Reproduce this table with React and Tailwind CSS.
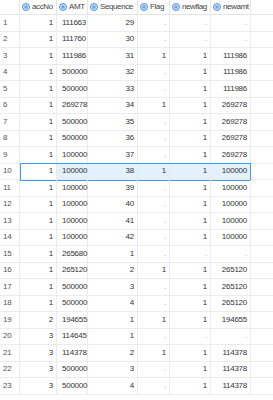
const rows = [
  [1, "111663", 29, ".", ".", "."],
  [1, "111760", 30, ".", ".", "."],
  [1, "111986", 31, "1", "1", "111986"],
  [1, "500000", 32, ".", "1", "111986"],
  [1, "500000", 33, ".", "1", "111986"],
  [1, "269278", 34, "1", "1", "269278"],
  [1, "500000", 35, ".", "1", "269278"],
  [1, "500000", 36, ".", "1", "269278"],
  [1, "100000", 37, ".", "1", "269278"],
  [1, "100000", 38, "1", "1", "100000"],
  [1, "100000", 39, ".", "1", "100000"],
  [1, "100000", 40, ".", "1", "100000"],
  [1, "100000", 41, ".", "1", "100000"],
  [1, "100000", 42, ".", "1", "100000"],
  [1, "265680", 1, ".", ".", "."],
  [1, "265120", 2, "1", "1", "265120"],
  [1, "500000", 3, ".", "1", "265120"],
  [1, "500000", 4, ".", "1", "265120"],
  [2, "194655", 1, "1", "1", "194655"],
  [3, "114645", 1, ".", ".", "."],
  [3, "114378", 2, "1", "1", "114378"],
  [3, "500000", 3, ".", "1", "114378"],
  [3, "500000", 4, ".", "1", "114378"],
];

const cols = "grid grid-cols-[20px_37px_31px_50px_32px_41px_40px]";

function NumIcon() {
  return (
    <svg width="8" height="8" viewBox="0 0 8 8" className="shrink-0">
      <circle cx="4" cy="4" r="3.5" fill="#d6e8fa" stroke="#3d86d8" strokeWidth="0.9" />
      <path d="M2.3 3.2h3.4M2.3 4.8h3.4M3.2 2.2v3.6M4.8 2.2v3.6" stroke="#3d86d8" strokeWidth="0.6" />
    </svg>
  );
}

function Head({ label }) {
  return (
    <div className="flex items-center gap-[2px] pl-[2px] border-r border-[#e6e6e6] overflow-hidden whitespace-nowrap tracking-[-0.4px]">
      <NumIcon />
      <span>{label}</span>
    </div>
  );
}

function Val({ v, left, sel }) {
  const miss = v === ".";
  return (
    <div
      className={`flex items-center border-r border-[#ececec] whitespace-nowrap ${
        left ? "justify-start pl-[5px]" : "justify-end pr-[3px]"
      } ${miss ? "text-[#9a9a9a]" : ""} ${sel ? "bg-[#e3f1fc]" : ""}`}
    >
      {v}
    </div>
  );
}

export default function App() {
  return (
    <div
      className="w-[273px] h-[400px] bg-white text-[#333] text-[8px] tracking-[-0.25px] overflow-hidden"
      style={{ fontFamily: '"Liberation Sans", Arial, sans-serif' }}
    >
      <div className={`${cols} h-[15px] border-b border-[#e6e6e6] text-[#444]`}>
        <div className="border-r border-[#e6e6e6]"></div>
        <Head label="accNo" />
        <Head label="AMT" />
        <Head label="Sequence" />
        <Head label="Flag" />
        <Head label="newflag" />
        <Head label="newamt" />
      </div>
      {rows.map((r, i) => {
        const sel = i === 9;
        return (
          <div key={i} className={`${cols} h-[16.5px] border-b border-[#ececec] relative`}>
            <div className="flex items-center pl-[3px] border-r border-[#ececec] text-[#555]">{i + 1}</div>
            <Val v={r[0]} />
            <Val v={r[1]} left sel={sel} />
            <Val v={r[2]} sel={sel} />
            <Val v={r[3]} sel={sel} />
            <Val v={r[4]} sel={sel} />
            <Val v={r[5]} sel={sel} />
            {sel && (
              <div className="absolute left-[20px] top-[-1px] w-[231px] h-[18px] border-[1.5px] border-[#3d9af0]"></div>
            )}
          </div>
        );
      })}
    </div>
  );
}
